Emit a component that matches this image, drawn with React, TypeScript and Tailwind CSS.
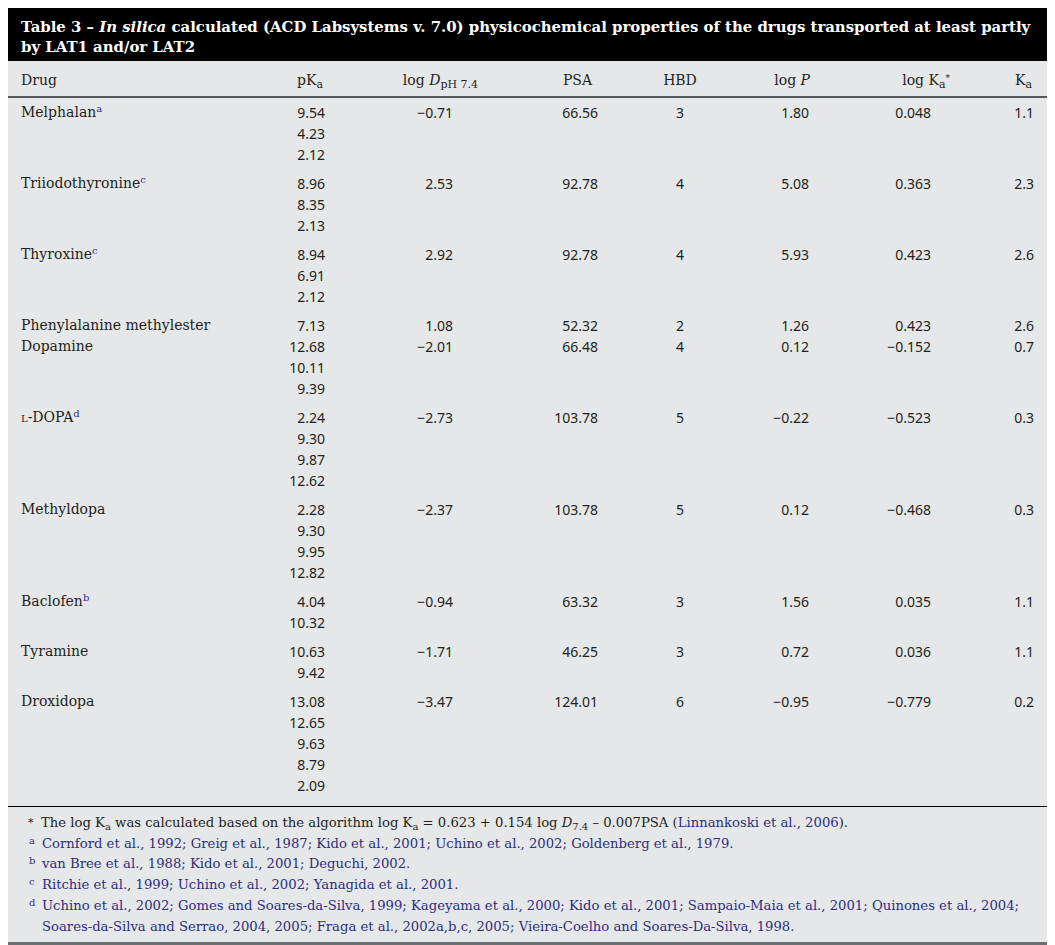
import React from "react";

type Row = {
  drug: React.ReactNode;
  pka: string[];
  logd: string;
  psa: string;
  hbd: string;
  logp: string;
  logka: string;
  ka: string;
  pad?: string;
};

const Sup = ({ children }: { children: React.ReactNode }) => (
  <sup className="text-[#2c2f7f] text-[10px]">{children}</sup>
);

const rows: Row[] = [
  { drug: <>Melphalan<Sup>a</Sup></>, pka: ["9.54", "4.23", "2.12"], logd: "−0.71", psa: "66.56", hbd: "3", logp: "1.80", logka: "0.048", ka: "1.1" },
  { drug: <>Triiodothyronine<Sup>c</Sup></>, pka: ["8.96", "8.35", "2.13"], logd: "2.53", psa: "92.78", hbd: "4", logp: "5.08", logka: "0.363", ka: "2.3" },
  { drug: <>Thyroxine<Sup>c</Sup></>, pka: ["8.94", "6.91", "2.12"], logd: "2.92", psa: "92.78", hbd: "4", logp: "5.93", logka: "0.423", ka: "2.6" },
  { drug: "Phenylalanine methylester", pka: ["7.13"], logd: "1.08", psa: "52.32", hbd: "2", logp: "1.26", logka: "0.423", ka: "2.6", pad: "pt-[3px] pb-0" },
  { drug: "Dopamine", pka: ["12.68", "10.11", "9.39"], logd: "−2.01", psa: "66.48", hbd: "4", logp: "0.12", logka: "−0.152", ka: "0.7", pad: "pt-0 pb-[5px]" },
  { drug: <><span className="[font-variant:small-caps]">l</span>-DOPA<Sup>d</Sup></>, pka: ["2.24", "9.30", "9.87", "12.62"], logd: "−2.73", psa: "103.78", hbd: "5", logp: "−0.22", logka: "−0.523", ka: "0.3" },
  { drug: "Methyldopa", pka: ["2.28", "9.30", "9.95", "12.82"], logd: "−2.37", psa: "103.78", hbd: "5", logp: "0.12", logka: "−0.468", ka: "0.3" },
  { drug: <>Baclofen<Sup>b</Sup></>, pka: ["4.04", "10.32"], logd: "−0.94", psa: "63.32", hbd: "3", logp: "1.56", logka: "0.035", ka: "1.1" },
  { drug: "Tyramine", pka: ["10.63", "9.42"], logd: "−1.71", psa: "46.25", hbd: "3", logp: "0.72", logka: "0.036", ka: "1.1" },
  { drug: "Droxidopa", pka: ["13.08", "12.65", "9.63", "8.79", "2.09"], logd: "−3.47", psa: "124.01", hbd: "6", logp: "−0.95", logka: "−0.779", ka: "0.2" },
];

const grid = "grid grid-cols-[252px_70px_150px_140px_120px_90px_130px_87px]";
const serif = "font-['DejaVu_Serif','Liberation_Serif',serif]";
const sans = "font-['Noto_Sans','DejaVu_Sans',sans-serif]";
const link = "text-[#2c2f7f]";

const Mark = ({ children }: { children: React.ReactNode }) => (
  <span className="w-[13px] shrink-0 text-[10px] leading-[14px] text-[#2c2f7f]">{children}</span>
);

export default function App() {
  return (
    <div className={`min-h-screen bg-white pt-2 pl-2 text-[#231f20] ${serif}`}>
      <div className="w-[1039px] bg-[#e6e7e8]">
        <div className="bg-black text-white font-bold text-[14.9px] leading-[20px] px-[13px] pt-[9px] pb-[4px]">
          Table 3 – <i>In silica</i> calculated (ACD Labsystems v. 7.0) physicochemical properties of the drugs transported at least partly
          <br />
          by LAT1 and/or LAT2
        </div>

        <div className={`${grid} h-[37px] pt-[4px] items-center border-b-2 border-[#58595b] text-[14px]`}>
          <div className="pl-[13px]">Drug</div>
          <div className="text-right pr-[7px]">
            pK<sub className="text-[11px]">a</sub>
          </div>
          <div className="text-right pr-[2px]">
            log <i>D</i>
            <sub className="text-[11px]">pH 7.4</sub>
          </div>
          <div className="text-right pr-[28px]">PSA</div>
          <div className="text-center">HBD</div>
          <div className="text-right pr-[20px]">
            log <i>P</i>
          </div>
          <div className="text-right pr-[10px]">
            log&nbsp;K<sub className="text-[11px]">a</sub>
            <sup className="text-[9px]">*</sup>
          </div>
          <div className="text-right pr-[15px]">
            K<sub className="text-[11px]">a</sub>
          </div>
        </div>

        <div className="pt-[1px] pb-[5px] text-[14px] leading-[21px]">
          {rows.map((r, i) => (
            <div key={i} className={`${grid} ${r.pad ?? "pt-[3px] pb-[5px]"}`}>
              <div className="pl-[13px]">{r.drug}</div>
              <div className={`text-right pr-[5px] ${sans}`}>
                {r.pka.map((p) => (
                  <div key={p}>{p}</div>
                ))}
              </div>
              <div className={`text-right pr-[27px] ${sans}`}>{r.logd}</div>
              <div className={`text-right pr-[22px] ${sans}`}>{r.psa}</div>
              <div className={`text-center ${sans}`}>{r.hbd}</div>
              <div className={`text-right pr-[21px] ${sans}`}>{r.logp}</div>
              <div className={`text-right pr-[29px] ${sans}`}>{r.logka}</div>
              <div className={`text-right pr-[13px] ${sans}`}>{r.ka}</div>
            </div>
          ))}
        </div>

        <div className="border-t border-black border-b-[3px] border-b-[#6d6e71] pt-[6px] pb-[5px] pl-[21px] pr-[8px] text-[13.2px] leading-[20.7px]">
          <div className="flex -ml-[1px]">
            <span className="w-[13px] shrink-0 text-[11px]">*</span>
            <span>
              The log K<sub className="text-[10px]">a</sub> was calculated based on the algorithm log K<sub className="text-[10px]">a</sub> = 0.623 + 0.154 log <i>D</i>
              <sub className="text-[10px]">7.4</sub> – 0.007PSA (<span className={link}>Linnankoski et al., 2006</span>).
            </span>
          </div>
          <div className="flex">
            <Mark>a</Mark>
            <span className={link}>Cornford et al., 1992; Greig et al., 1987; Kido et al., 2001; Uchino et al., 2002; Goldenberg et al., 1979.</span>
          </div>
          <div className="flex">
            <Mark>b</Mark>
            <span className={link}>van Bree et al., 1988; Kido et al., 2001; Deguchi, 2002.</span>
          </div>
          <div className="flex">
            <Mark>c</Mark>
            <span className={link}>Ritchie et al., 1999; Uchino et al., 2002; Yanagida et al., 2001.</span>
          </div>
          <div className="flex">
            <Mark>d</Mark>
            <span className={link}>
              Uchino et al., 2002; Gomes and Soares-da-Silva, 1999; Kageyama et al., 2000; Kido et al., 2001; Sampaio-Maia et al., 2001; Quinones et al., 2004;
              Soares-da-Silva and Serrao, 2004, 2005; Fraga et al., 2002a,b,c, 2005; Vieira-Coelho and Soares-Da-Silva, 1998.
            </span>
          </div>
        </div>
      </div>
    </div>
  );
}
